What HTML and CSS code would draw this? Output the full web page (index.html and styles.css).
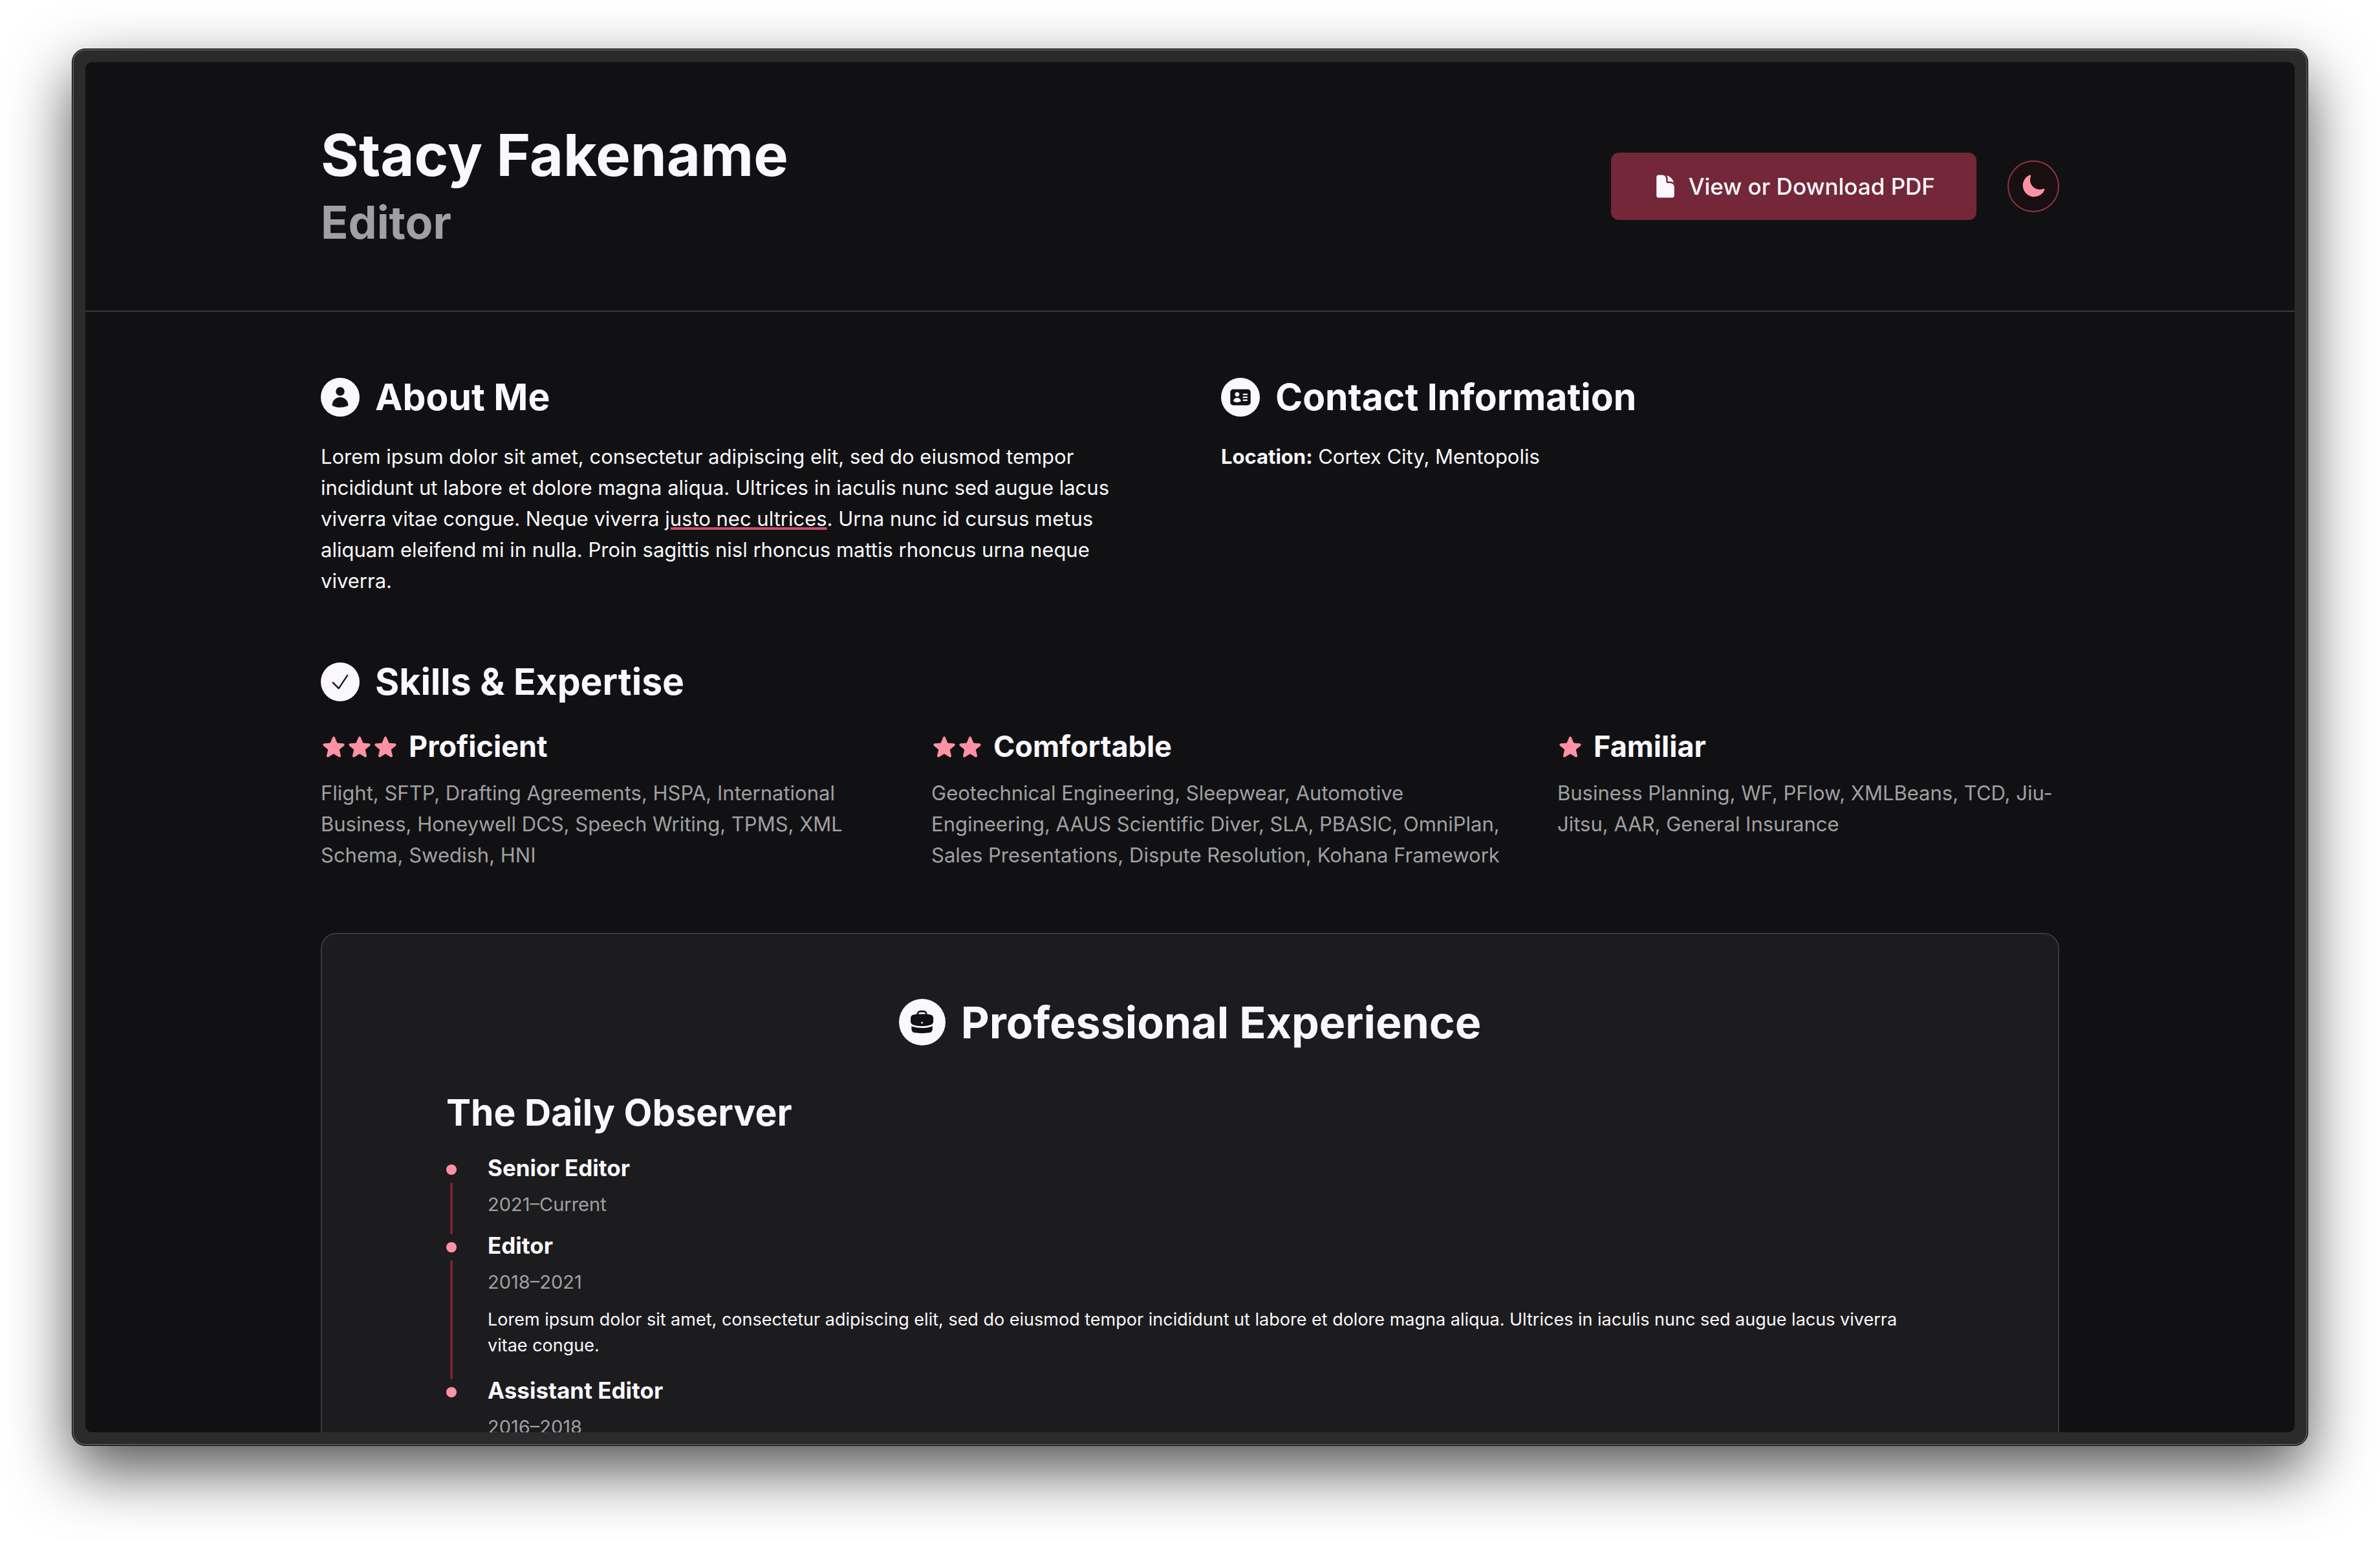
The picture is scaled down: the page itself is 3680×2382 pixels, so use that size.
FILE: index.html
```html
<!DOCTYPE html>
<html lang="en">
<head>
<meta charset="utf-8">
<meta name="viewport" content="width=device-width, initial-scale=1">
<title>Stacy Fakename – Editor</title>
<link rel="stylesheet" href="styles.css">
</head>
<body>
<svg class="sprite" aria-hidden="true">
  <symbol id="star" viewBox="0 0 20 20"><path d="M10.868 2.884c-.321-.772-1.415-.772-1.736 0l-1.83 4.401-4.753.381c-.833.067-1.171 1.107-.536 1.651l3.62 3.102-1.106 4.637c-.194.813.691 1.456 1.405 1.02L10 15.591l4.069 2.485c.713.436 1.598-.207 1.404-1.02l-1.106-4.637 3.62-3.102c.635-.544.297-1.584-.536-1.65l-4.752-.382-1.831-4.401Z"/></symbol>
</svg>
<div class="window">
  <div class="screen">
    <header class="header">
      <div class="container header-row">
        <div>
          <h1 class="name">Stacy Fakename</h1>
          <p class="role">Editor</p>
        </div>
        <div class="actions">
          <a class="button" href="#pdf">
            <svg class="icon" viewBox="0 0 24 24" aria-hidden="true"><path d="M5.625 1.5c-1.036 0-1.875.84-1.875 1.875v17.25c0 1.035.84 1.875 1.875 1.875h12.75c1.035 0 1.875-.84 1.875-1.875V12.75A3.75 3.75 0 0 0 16.5 9h-1.875a1.875 1.875 0 0 1-1.875-1.875V5.25A3.75 3.75 0 0 0 9 1.5H5.625Z"/><path d="M12.971 1.816A5.23 5.23 0 0 1 14.25 5.25v1.875c0 .207.168.375.375.375H16.5a5.23 5.23 0 0 1 3.434 1.279 9.768 9.768 0 0 0-6.963-6.963Z"/></svg>
            View or Download PDF
          </a>
          <button class="theme-toggle" type="button" aria-label="Toggle dark mode">
            <svg class="icon" viewBox="0 0 24 24" aria-hidden="true"><path fill-rule="evenodd" d="M9.528 1.718a.75.75 0 0 1 .162.819A8.97 8.97 0 0 0 9 6a9 9 0 0 0 9 9 8.97 8.97 0 0 0 3.463-.69.75.75 0 0 1 .981.98 10.503 10.503 0 0 1-9.694 6.46c-5.799 0-10.5-4.7-10.5-10.5 0-4.368 2.667-8.112 6.46-9.694a.75.75 0 0 1 .818.162Z"/></svg>
          </button>
        </div>
      </div>
    </header>

    <main class="container main">
      <div class="intro">
        <section>
          <h2 class="heading">
            <span class="badge"><svg class="badge-icon" viewBox="0 0 24 24" aria-hidden="true"><path fill-rule="evenodd" d="M7.5 6a4.5 4.5 0 1 1 9 0 4.5 4.5 0 0 1-9 0ZM3.751 20.105a8.25 8.25 0 0 1 16.498 0 .75.75 0 0 1-.437.695A18.683 18.683 0 0 1 12 22.5c-2.786 0-5.433-.608-7.812-1.7a.75.75 0 0 1-.437-.695Z"/></svg></span>
            About Me
          </h2>
          <p class="text">Lorem ipsum dolor sit amet, consectetur adipiscing elit, sed do eiusmod tempor incididunt ut labore et dolore magna aliqua. Ultrices in iaculis nunc sed augue lacus viverra vitae congue. Neque viverra <a class="link" href="#justo">justo nec ultrices</a>. Urna nunc id cursus metus aliquam eleifend mi in nulla. Proin sagittis nisl rhoncus mattis rhoncus urna neque viverra.</p>
        </section>
        <section>
          <h2 class="heading">
            <span class="badge"><svg class="badge-icon" viewBox="0 0 24 24" aria-hidden="true"><path fill-rule="evenodd" d="M4.5 3.75a3 3 0 0 0-3 3v10.5a3 3 0 0 0 3 3h15a3 3 0 0 0 3-3V6.75a3 3 0 0 0-3-3h-15Zm4.125 3a2.25 2.25 0 1 0 0 4.5 2.25 2.25 0 0 0 0-4.5Zm-3.873 8.703a4.126 4.126 0 0 1 7.746 0 .75.75 0 0 1-.351.92 7.47 7.47 0 0 1-3.522.877 7.47 7.47 0 0 1-3.522-.877.75.75 0 0 1-.351-.92ZM15 8.25a.75.75 0 0 0 0 1.5h3.75a.75.75 0 0 0 0-1.5H15ZM14.25 12a.75.75 0 0 1 .75-.75h3.75a.75.75 0 0 1 0 1.5H15a.75.75 0 0 1-.75-.75Zm.75 2.25a.75.75 0 0 0 0 1.5h3.75a.75.75 0 0 0 0-1.5H15Z"/></svg></span>
            Contact Information
          </h2>
          <p class="text"><strong>Location:</strong> Cortex City, Mentopolis</p>
        </section>
      </div>

      <section>
        <h2 class="heading">
          <span class="badge"><svg class="badge-icon badge-icon-line" viewBox="0 0 24 24" aria-hidden="true"><path d="m4.5 12.75 6 6 9-13.5"/></svg></span>
          Skills &amp; Expertise
        </h2>
        <div class="skills">
          <div>
            <h3 class="level"><span class="stars"><svg class="icon"><use href="#star"/></svg><svg class="icon"><use href="#star"/></svg><svg class="icon"><use href="#star"/></svg></span>Proficient</h3>
            <p class="text muted">Flight, SFTP, Drafting Agreements, HSPA, International Business, Honeywell DCS, Speech Writing, TPMS, XML Schema, Swedish, HNI</p>
          </div>
          <div>
            <h3 class="level"><span class="stars"><svg class="icon"><use href="#star"/></svg><svg class="icon"><use href="#star"/></svg></span>Comfortable</h3>
            <p class="text muted">Geotechnical Engineering, Sleepwear, Automotive Engineering, AAUS Scientific Diver, SLA, PBASIC, OmniPlan, Sales Presentations, Dispute Resolution, Kohana Framework</p>
          </div>
          <div>
            <h3 class="level"><span class="stars"><svg class="icon"><use href="#star"/></svg></span>Familiar</h3>
            <p class="text muted">Business Planning, WF, PFlow, XMLBeans, TCD, Jiu-Jitsu, AAR, General Insurance</p>
          </div>
        </div>
      </section>

      <section class="card">
        <h2 class="heading heading-large">
          <span class="badge badge-large"><svg class="badge-icon" viewBox="0 0 24 24" aria-hidden="true"><path fill-rule="evenodd" d="M7.5 5.25a3 3 0 0 1 3-3h3a3 3 0 0 1 3 3v.205c.933.085 1.857.197 2.774.334 1.454.218 2.476 1.483 2.476 2.917v3.033c0 1.211-.734 2.352-1.936 2.752A24.726 24.726 0 0 1 12 15.75c-2.73 0-5.357-.442-7.814-1.259-1.202-.4-1.936-1.541-1.936-2.752V8.706c0-1.434 1.022-2.7 2.476-2.917A48.814 48.814 0 0 1 7.5 5.455V5.25Zm7.5 0v.09a49.488 49.488 0 0 0-6 0v-.09a1.5 1.5 0 0 1 1.5-1.5h3a1.5 1.5 0 0 1 1.5 1.5Zm-3 8.25a.75.75 0 1 0 0-1.5.75.75 0 0 0 0 1.5Z"/><path d="M3 18.4v-2.796a4.3 4.3 0 0 0 .713.31A26.226 26.226 0 0 0 12 17.25c2.892 0 5.68-.468 8.287-1.335.252-.084.49-.189.713-.311V18.4c0 1.452-1.047 2.728-2.523 2.923-2.12.282-4.282.427-6.477.427a49.19 49.19 0 0 1-6.477-.427C4.047 21.128 3 19.852 3 18.4Z"/></svg></span>
          Professional Experience
        </h2>
        <h3 class="company">The Daily Observer</h3>
        <ol class="timeline">
          <li class="job">
            <div class="marker"></div>
            <div class="job-body">
              <h4 class="job-title">Senior Editor</h4>
              <p class="job-dates">2021–Current</p>
            </div>
          </li>
          <li class="job">
            <div class="marker"></div>
            <div class="job-body">
              <h4 class="job-title">Editor</h4>
              <p class="job-dates">2018–2021</p>
              <p class="job-text">Lorem ipsum dolor sit amet, consectetur adipiscing elit, sed do eiusmod tempor incididunt ut labore et dolore magna aliqua. Ultrices in iaculis nunc sed augue lacus viverra vitae congue.</p>
            </div>
          </li>
          <li class="job">
            <div class="marker"></div>
            <div class="job-body">
              <h4 class="job-title">Assistant Editor</h4>
              <p class="job-dates">2016–2018</p>
            </div>
          </li>
        </ol>
      </section>
    </main>
  </div>
</div>
</body>
</html>
```
FILE: styles.css
```css
:root {
  --bg: #111113;
  --surface: #1c1c1e;
  --line: #39393b;
  --text: #faf8fd;
  --muted: #a0a0a2;
  --accent: #ff91a4;
  --accent-mid: #c4506a;
  --accent-deep: #732738;
}

* {
  box-sizing: border-box;
}

body {
  margin: 0;
  height: 100vh;
  padding: 75px 111px 147px;
  background: #fff;
  color: var(--text);
  font-family: Inter, "Liberation Sans", sans-serif;
}

h1, h2, h3, h4, p, ol {
  margin: 0;
  padding: 0;
}

.sprite {
  display: none;
}

/* Window frame */
.window {
  display: flex;
  height: 100%;
  padding: 20px;
  border: 1px solid #000;
  border-radius: 21px;
  background: #2b2b2b;
  box-shadow: inset 0 0 0 2px #555, 0 38px 96px rgba(0, 0, 0, 0.68);
}

.screen {
  flex: 1;
  overflow: hidden;
  border-radius: 10px;
  background: var(--bg);
}

.container {
  max-width: 2688px;
  margin: 0 auto;
}

/* Header */
.header {
  padding: 88px 0;
  border-bottom: 2px solid var(--line);
}

.header-row {
  display: flex;
  align-items: center;
  justify-content: space-between;
}

.name {
  font-size: 90px;
  font-weight: 700;
  line-height: 112px;
}

.role {
  color: var(--muted);
  font-size: 70px;
  font-weight: 700;
  line-height: 96px;
}

.actions {
  display: flex;
  align-items: center;
  gap: 48px;
}

.icon {
  display: block;
  width: 40px;
  height: 40px;
  fill: currentColor;
}

.button {
  display: flex;
  align-items: center;
  gap: 16px;
  height: 104px;
  padding: 0 64px;
  border-radius: 12px;
  background: var(--accent-deep);
  color: var(--text);
  font-size: 35px;
  font-weight: 500;
  text-decoration: none;
}

.theme-toggle {
  display: flex;
  align-items: center;
  justify-content: center;
  width: 80px;
  height: 80px;
  padding: 0;
  border: 2px solid #8b3349;
  border-radius: 50%;
  background: #190e10;
  color: var(--accent);
}

/* Sections */
.main {
  display: flex;
  flex-direction: column;
  gap: 96px;
  padding: 96px 0;
}

.intro {
  display: grid;
  grid-template-columns: 1fr 1fr;
  gap: 96px;
}

.heading {
  display: flex;
  align-items: center;
  gap: 24px;
  margin-bottom: 32px;
  font-size: 57px;
  font-weight: 700;
  line-height: 72px;
}

.badge {
  display: flex;
  align-items: center;
  justify-content: center;
  width: 60px;
  height: 60px;
  border-radius: 50%;
  background: var(--text);
  color: var(--bg);
}

.badge-icon {
  width: 60%;
  height: 60%;
  fill: currentColor;
}

.badge-icon-line {
  fill: none;
  stroke: currentColor;
  stroke-width: 1.5;
  stroke-linecap: round;
  stroke-linejoin: round;
}

.text {
  font-size: 31px;
  line-height: 48px;
}

.muted {
  color: var(--muted);
}

.link {
  color: inherit;
  text-decoration: underline 4px var(--accent-mid);
  text-underline-offset: 2px;
}

.skills {
  display: grid;
  grid-template-columns: 880fr 904fr 776fr;
  gap: 64px;
}

.level {
  display: flex;
  align-items: center;
  gap: 16px;
  margin-bottom: 16px;
  font-size: 45px;
  font-weight: 700;
  line-height: 64px;
}

.stars {
  display: flex;
  color: var(--accent);
}

/* Experience */
.card {
  padding: 96px 192px;
  border: 2px solid var(--line);
  border-radius: 24px;
  background: var(--surface);
}

.heading-large {
  justify-content: center;
  margin-bottom: 64px;
  font-size: 68px;
  line-height: 80px;
}

.badge-large {
  width: 72px;
  height: 72px;
}

.company {
  margin-bottom: 24px;
  font-size: 57px;
  font-weight: 700;
  line-height: 72px;
}

.timeline {
  list-style: none;
}

.job {
  display: flex;
  gap: 48px;
}

.marker {
  display: flex;
  flex-direction: column;
  align-items: center;
  gap: 12px;
  width: 16px;
  margin-bottom: -8px;
  padding-top: 20px;
}

.marker::before {
  content: "";
  width: 16px;
  height: 16px;
  border-radius: 50%;
  background: var(--accent);
}

.marker::after {
  content: "";
  flex: 1;
  width: 4px;
  border-radius: 2px;
  background: var(--accent-deep);
}

.job:last-child .marker::after {
  display: none;
}

.job-body {
  flex: 1;
  padding-bottom: 18px;
}

.job-title {
  margin-bottom: 12px;
  font-size: 35px;
  font-weight: 700;
  line-height: 50px;
}

.job-dates {
  color: var(--muted);
  font-size: 29px;
  line-height: 40px;
}

.job-text {
  margin: 18px 0 6px;
  font-size: 27px;
  line-height: 40px;
}
```
